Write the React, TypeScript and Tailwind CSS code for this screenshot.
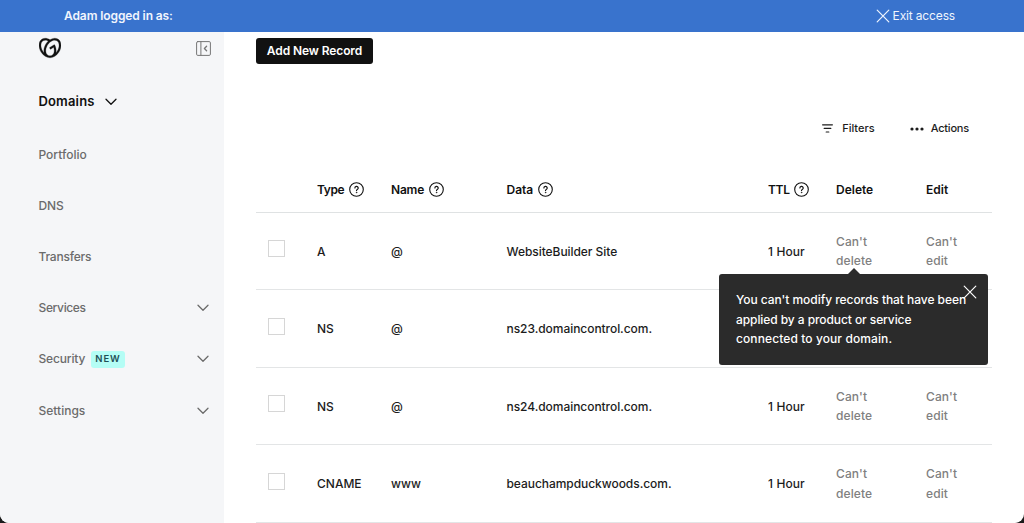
import { SiGodaddy } from 'react-icons/si';

interface NavItem {
  label: string;
  tracking: string;
  expandable?: boolean;
  badge?: string;
}

interface DnsRecord {
  type: string;
  name: string;
  data: string;
  ttl?: string;
  showTooltip?: boolean;
}

const navItems: NavItem[] = [
  { label: 'Portfolio', tracking: 'tracking-[0px]' },
  { label: 'DNS', tracking: 'tracking-[-0.1px]' },
  { label: 'Transfers', tracking: 'tracking-[-0.2px]' },
  { label: 'Services', tracking: 'tracking-[-0.35px]', expandable: true },
  { label: 'Security', tracking: 'tracking-[-0.15px]', expandable: true, badge: 'NEW' },
  { label: 'Settings', tracking: 'tracking-[0px]', expandable: true },
];

// the second row's right-hand cells sit behind the open tooltip
const records: DnsRecord[] = [
  { type: 'A', name: '@', data: 'WebsiteBuilder Site', ttl: '1 Hour', showTooltip: true },
  { type: 'NS', name: '@', data: 'ns23.domaincontrol.com.' },
  { type: 'NS', name: '@', data: 'ns24.domaincontrol.com.', ttl: '1 Hour' },
  { type: 'CNAME', name: 'www', data: 'beauchampduckwoods.com.', ttl: '1 Hour' },
];

const gridCols = 'grid grid-cols-[61px_74px_115.5px_261.5px_68px_90px_66px]';

function Chevron({ className }: { className?: string }) {
  return (
    <svg width="12" height="8" viewBox="0 0 12 8" fill="none" stroke="currentColor" strokeWidth="1.3" strokeLinecap="round" strokeLinejoin="round" className={className}>
      <path d="M1 1.2 6 6.2 11 1.2" />
    </svg>
  );
}

function CloseIcon() {
  return (
    <svg width="14" height="14" viewBox="0 0 14 14" fill="none" stroke="currentColor" strokeWidth="1.2" strokeLinecap="round">
      <path d="M1.2 1.2 12.8 12.8M12.8 1.2 1.2 12.8" />
    </svg>
  );
}

function HelpIcon() {
  return (
    <svg width="15" height="15" viewBox="0 0 15 15" fill="none" stroke="currentColor" strokeLinecap="round" strokeLinejoin="round">
      <circle cx="7.5" cy="7.5" r="6.8" strokeWidth="1.1" />
      <path d="M5.9 6a1.65 1.65 0 1 1 2.4 1.45c-.55.3-.8.55-.8 1.1" strokeWidth="1.2" />
      <circle cx="7.5" cy="10.6" r=".35" fill="currentColor" strokeWidth=".6" />
    </svg>
  );
}

function Tooltip() {
  return (
    <div className="absolute left-[-117px] top-[61px] z-10 h-[91px] w-[269px] rounded-[3px] bg-[#2b2b2b] text-white">
      <svg width="14" height="7" viewBox="0 0 14 7" className="absolute left-[128px] top-[-6px]">
        <path d="M0 7 7 0l7 7z" fill="#2b2b2b" />
      </svg>
      <p className="whitespace-nowrap pl-[17px] pt-[16.8px] text-[12px] leading-[19.3px]">
        <span className="tracking-[-0.05px]">You can't modify records that have been</span>
        <br />
        <span className="tracking-[-0.08px]">applied by a product or service</span>
        <br />
        connected to your domain.
      </p>
      <button className="absolute right-[11.5px] top-[11.5px]">
        <CloseIcon />
      </button>
    </div>
  );
}

function Sidebar() {
  return (
    <aside className="flex w-[224px] shrink-0 flex-col bg-[#f5f6f8] pl-[38.5px] pr-[13.5px]">
      <div className="flex h-[32px] items-center justify-between">
        <SiGodaddy size={22} stroke="currentColor" strokeWidth={0.3} className="text-[#111]" />
        <svg width="15" height="15" viewBox="0 0 15 15" fill="none" stroke="#767676" strokeLinecap="round" strokeLinejoin="round">
          <rect x=".6" y=".6" width="13.8" height="13.8" rx="1.2" strokeWidth="1" />
          <path d="M4.9.6v13.8" strokeWidth="1" />
          <path d="M10.6 5.3 8.4 7.5l2.2 2.2" strokeWidth="1.3" />
        </svg>
      </div>
      <button className="mt-[25px] flex h-[26px] items-center gap-[10px] text-[13px] font-semibold tracking-[0.15px] text-[#111]">
        Domains
        <Chevron />
      </button>
      <nav className="mt-[14px] flex flex-col">
        {navItems.map((item) => (
          <a key={item.label} className="flex h-[51.2px] items-center text-[12px] font-medium text-[#6b6b6b]">
            <span className={item.tracking}>{item.label}</span>
            {item.badge && (
              <span className="ml-[6px] flex h-[17px] w-[33.5px] items-center justify-center rounded-[3px] bg-[#b4fdf5] text-[9.5px] font-semibold tracking-[0.9px] text-[#1f4f55]">
                {item.badge}
              </span>
            )}
            {item.expandable && <Chevron className="ml-auto mr-[1.5px]" />}
          </a>
        ))}
      </nav>
    </aside>
  );
}

function RecordRow({ record }: { record: DnsRecord }) {
  return (
    <div className={`${gridCols} h-[77.5px] items-center border-b border-[#e3e5e6] text-[12px] font-medium text-[#1c1c1c]`}>
      <div className="pb-[4.5px] pl-[12px]">
        <div className="size-[17px] border border-[#d6d6d6] bg-white" />
      </div>
      <span className="pt-[2px]">{record.type}</span>
      <span className="pt-[2px]">{record.name}</span>
      <span className="pt-[2px] tracking-[-0.05px]">{record.data}</span>
      {record.ttl && (
        <>
          <span className="pt-[2px] tracking-[0.1px]">{record.ttl}</span>
          <div className="relative flex h-full items-center pt-[1px] leading-[19.4px] tracking-[0.1px] text-[#808080]">
            <span>
              Can't
              <br />
              delete
            </span>
            {record.showTooltip && <Tooltip />}
          </div>
          <span className="pt-[1px] leading-[19.4px] tracking-[0.1px] text-[#808080]">
            Can't
            <br />
            edit
          </span>
        </>
      )}
    </div>
  );
}

export default function App() {
  return (
    <div className="h-[523px] w-[1024px] overflow-hidden bg-[#1b1b1b] font-['Inter',sans-serif]">
      <div className="flex h-full flex-col overflow-hidden rounded-b-[9px] bg-white">
        <header className="flex h-[32px] shrink-0 items-center justify-between bg-[#3973cd] pl-[64px] pr-[69px] text-[12px] text-[#f0f5fd]">
          <span className="font-semibold tracking-[-0.1px]">Adam logged in as:</span>
          <button className="flex items-center gap-[3px] tracking-[-0.15px]">
            <CloseIcon />
            Exit access
          </button>
        </header>
        <div className="flex min-h-0 flex-1">
          <Sidebar />
          <main className="flex flex-1 flex-col px-[32px] pt-[6px]">
            <button className="h-[26px] w-[117px] shrink-0 rounded-[3px] bg-[#111] text-[12px] font-semibold tracking-[-0.1px] text-white">
              Add New Record
            </button>
            <div className="mt-[51.5px] flex h-[26px] shrink-0 items-center justify-end pr-[23px] text-[11px] font-medium text-[#1c1c1c]">
              <button className="flex items-center gap-[9px]">
                <svg width="11" height="9" viewBox="0 0 11 9" stroke="currentColor" strokeWidth="1.2" strokeLinecap="round">
                  <path d="M.6.8h9.8M2.2 4.4h6.6M4.2 8h2.6" />
                </svg>
                Filters
              </button>
              <button className="ml-[35px] flex items-center gap-[7px] tracking-[-0.2px]">
                <svg width="14" height="4" viewBox="0 0 14 4" fill="currentColor">
                  <circle cx="2" cy="2" r="1.6" />
                  <circle cx="7" cy="2" r="1.6" />
                  <circle cx="12" cy="2" r="1.6" />
                </svg>
                Actions
              </button>
            </div>
            <div className={`${gridCols} mt-[24.5px] h-[46.5px] shrink-0 items-center border-b border-[#dfe2e3] pt-[2px] text-[12px] font-semibold text-[#111]`}>
              <span />
              <span className="flex items-center gap-[5px] tracking-[-0.4px]">Type <HelpIcon /></span>
              <span className="flex items-center gap-[5px] tracking-[-0.2px]">Name <HelpIcon /></span>
              <span className="flex items-center gap-[4.5px]">Data <HelpIcon /></span>
              <span className="flex items-center gap-[4.5px] tracking-[-0.3px]">TTL <HelpIcon /></span>
              <span>Delete</span>
              <span>Edit</span>
            </div>
            <div className="flex flex-col">
              {records.map((record) => (
                <RecordRow key={record.data} record={record} />
              ))}
            </div>
          </main>
        </div>
      </div>
    </div>
  );
}
